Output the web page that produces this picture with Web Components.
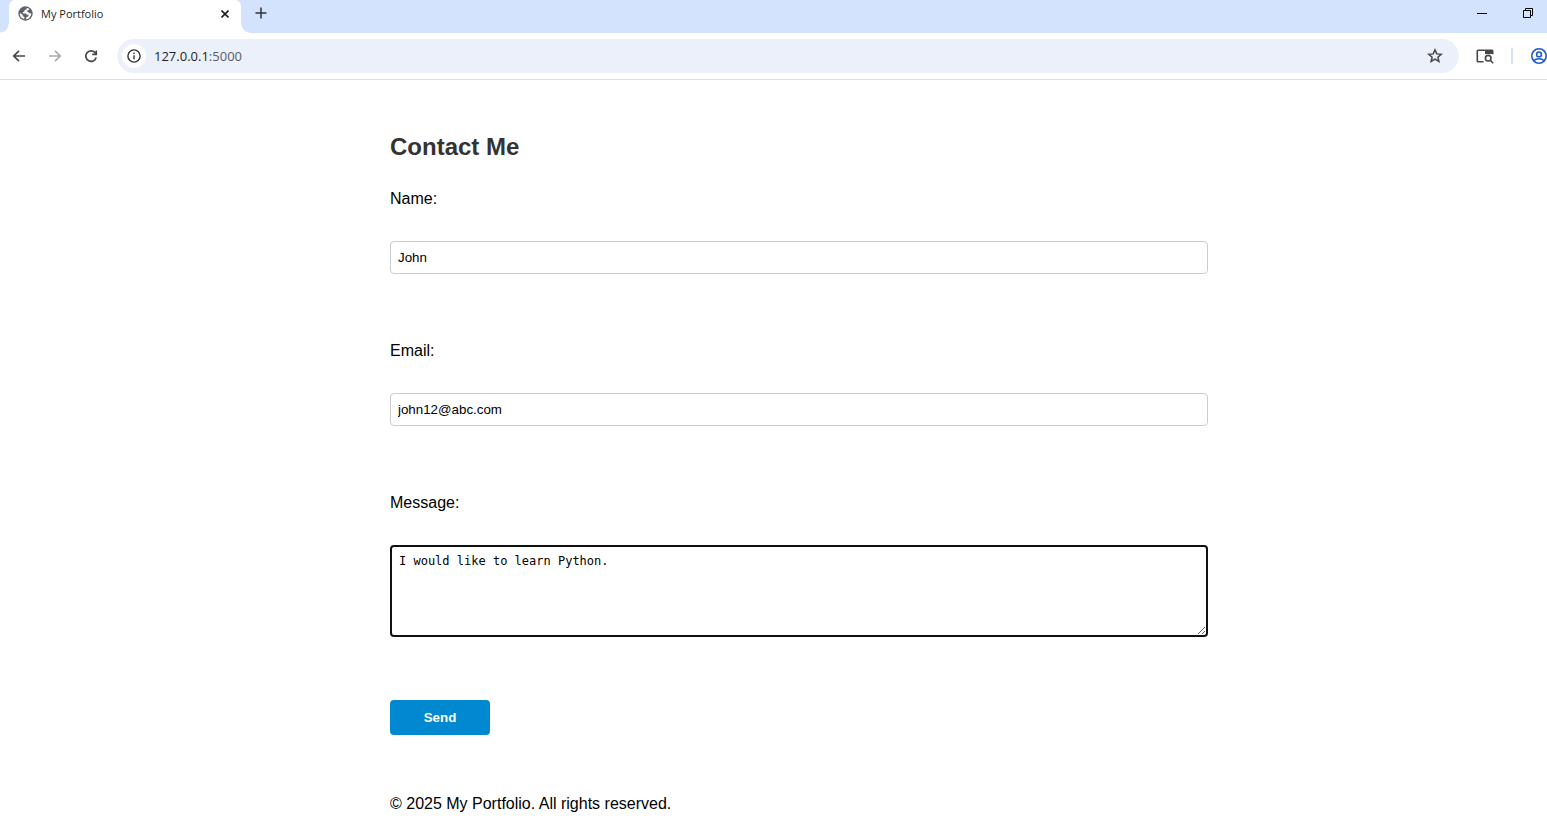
<!DOCTYPE html>
<html lang="en">
<head>
<meta charset="utf-8">
<meta name="viewport" content="width=device-width, initial-scale=1">
<title>My Portfolio</title>
<style>
  html, body { margin: 0; background: #fff; }
  body { font: 16px/24px "Liberation Sans", Arial, sans-serif; color: #000; }
</style>
</head>
<body>
<tab-strip><browser-tab>My Portfolio</browser-tab></tab-strip>
<nav-toolbar host="127.0.0.1" port=":5000"></nav-toolbar>
<contact-page>
  <span slot="title">Contact Me</span>
  <form-field label="Name:" type="text" value="John"></form-field>
  <form-field label="Email:" type="email" value="john12@abc.com"></form-field>
  <form-field label="Message:" type="multiline" value="I would like to learn Python."></form-field>
  <submit-button>Send</submit-button>
  <span slot="footer">© 2025 My Portfolio. All rights reserved.</span>
</contact-page>
<script>
const reset = `:host, *, *::before, *::after { box-sizing: border-box; }
  button { border: 0; margin: 0; padding: 0; background: none; font-family: inherit; color: inherit; }
  svg { display: block; }`;

class BaseElement extends HTMLElement {
  constructor() { super(); this.attachShadow({ mode: "open" }); }
  connectedCallback() {
    const t = document.createElement("template");
    t.innerHTML = `<style>${reset}${this.styles()}</style>${this.markup()}`;
    this.shadowRoot.replaceChildren(t.content.cloneNode(true));
  }
}

customElements.define("tab-strip", class extends BaseElement {
  styles() { return `
    :host { display: flex; height: 33px; padding-left: 9px; background: #d3e2fd; color: #1f1f1f; }
    .add { width: 40px; height: 26px; display: grid; place-items: center; }
    .window { margin-left: auto; display: flex; gap: 4px; height: 26px; color: #000; }
    .window button { display: grid; place-items: center; width: 46px; }
    .window button:last-child { width: 38px; }`; }
  markup() { return `<slot></slot>
    <button class="add" aria-label="New tab"><svg width="12" height="12" viewBox="0 0 12 12" fill="none" stroke="#303134" stroke-width="1.5"><path d="M6 .5v11M.5 6h11"/></svg></button>
    <div class="window">
      <button aria-label="Minimize"><svg width="10" height="10" viewBox="0 0 10 10"><path d="M0 5h10v1H0z"/></svg></button>
      <button aria-label="Restore"><svg width="10" height="10" viewBox="0 0 10 10" fill="none" stroke="#000"><path d="M.5 2.5h7v7h-7zM2.5 2.5v-2h7v7h-2"/></svg></button>
    </div>`; }
});

customElements.define("browser-tab", class extends BaseElement {
  styles() { return `
    :host { position: relative; display: flex; align-items: center; width: 232px; height: 33px; padding: 0 10px 6px 9px;
      background: #fff; border-radius: 6px 6px 0 0; font: 11px/20px "Open Sans", "Noto Sans", sans-serif; }
    :host::before, :host::after { content: ""; position: absolute; bottom: 0; width: 9px; height: 9px; }
    :host::before { right: 100%; background: radial-gradient(circle at 0 0, transparent 8px, #fff 9px); }
    :host::after { left: 100%; background: radial-gradient(circle at 100% 0, transparent 8px, #fff 9px); }
    .title { margin-left: 8px; flex: 1; white-space: nowrap; }
    button { width: 12px; height: 12px; display: grid; place-items: center; }`; }
  markup() { return `
    <svg width="15" height="15" viewBox="0 0 15 15"><circle cx="7.5" cy="7.5" r="7.2" fill="#5f6368"/>
      <path d="M8.7 1.7 8.6 3.4 6.7 4.1 6.1 5.7 4.7 6.1 5 7.4 8 7.4 8.9 8.7 10.6 8.7 10.3 10.5 8.4 11.2 8 13.3A5.8 5.8 0 0 0 13.3 7.2L11.8 7.6 10.3 6.3 9.2 6 9.5 4.4 11 3.7 11.4 2.9A5.8 5.8 0 0 0 8.7 1.7ZM1.8 7.1A5.7 5.7 0 0 0 6.3 13.1L6.4 11 4.9 10.3 4.6 8.8Z" fill="#fff"/></svg>
    <span class="title"><slot></slot></span>
    <button aria-label="Close tab"><svg width="8" height="8" viewBox="0 0 8 8" stroke="#1f1f1f" stroke-width="1.6"><path d="m.5.5 7 7m0-7-7 7"/></svg></button>`; }
});

customElements.define("nav-toolbar", class extends BaseElement {
  styles() { return `
    :host { display: flex; align-items: center; height: 47px; padding-left: 1px; background: #fff; border-bottom: 1px solid #dedede; color: #474747; }
    .nav { width: 36px; height: 36px; display: grid; place-items: center; flex: none; }
    .nav:disabled { color: #ababab; }
    .omnibox { flex: 1; min-width: 0; height: 34px; margin: 0 8px; padding: 0 16px 0 5px; display: flex; align-items: center; border-radius: 17px; background: #ecf0fa; }
    .info { flex: none; width: 24px; height: 24px; border-radius: 50%; background: #fff; display: grid; place-items: center; color: #303134; }
    .url { flex: 1; margin-left: 8px; font: 13px/20px "Open Sans", "Noto Sans", sans-serif; color: #1f1f1f; }
    .port { color: #5a5d61; }
    .divider { flex: none; width: 2px; height: 16px; margin: 0 18px 0 8px; background: #d3e2fd; }
    .profile { flex: none; color: #1f5bc4; }`; }
  markup() { return `
    <button class="nav" aria-label="Back"><svg width="14" height="14" viewBox="0 0 14 14" fill="none" stroke="currentColor" stroke-width="1.7"><path d="M13 7H2M7 1.8 1.8 7 7 12.2"/></svg></button>
    <button class="nav" aria-label="Forward" disabled><svg width="14" height="14" viewBox="0 0 14 14" fill="none" stroke="currentColor" stroke-width="1.7"><path d="M1 7h11M7 1.8 12.2 7 7 12.2"/></svg></button>
    <button class="nav" aria-label="Reload"><svg width="14" height="14" viewBox="0 0 14 14" fill="none" stroke="currentColor" stroke-width="1.7"><path d="M12.2 8.5A5.3 5.3 0 1 1 11 3.5l1.2 1.4M12.3 1.4v4H8.2"/></svg></button>
    <div class="omnibox">
      <button class="info" aria-label="View site information"><svg width="14" height="14" viewBox="0 0 14 14" fill="none" stroke="currentColor" stroke-width="1.4"><circle cx="7" cy="7" r="6.1"/><path d="M7 6.2v4M7 3.6v1.5"/></svg></button>
      <span class="url">${this.getAttribute("host")}<span class="port">${this.getAttribute("port")}</span></span>
      <button aria-label="Bookmark this tab"><svg width="16" height="16" viewBox="0 0 16 16" fill="none" stroke="currentColor" stroke-width="1.5"><path d="m8 1.9 1.8 4 4.4.4-3.3 2.9 1 4.3L8 11.2l-3.9 2.3 1-4.3-3.3-2.9 4.4-.4Z"/></svg></button>
    </div>
    <button class="nav" aria-label="Search this page"><svg width="18" height="16" viewBox="0 0 18 16" fill="none" stroke="currentColor" stroke-width="1.6"><path d="M7.5 13.7H2.1q-.8 0-.8-.8V3.1q0-.8.8-.8h13.8q.8 0 .8.8v3.2"/><path d="M9 2h8v4H9z" fill="currentColor" stroke="none"/><circle cx="12.2" cy="10.2" r="2.8"/><path d="m14.2 12.2 3 3"/></svg></button>
    <span class="divider"></span>
    <button class="profile" aria-label="Profile"><svg width="16" height="16" viewBox="0 0 16 16" fill="none" stroke="currentColor" stroke-width="1.6"><circle cx="8" cy="8" r="7.2"/><circle cx="8" cy="6.4" r="2.4"/><path d="M2.8 12.8q2-2 5.2-2t5.2 2"/></svg></button>`; }
});

customElements.define("contact-page", class extends BaseElement {
  styles() { return `
    :host { display: grid; grid-template-columns: minmax(16px, 390fr) minmax(0, 818px) minmax(16px, 339fr); padding-top: 53px; }
    main, footer { grid-column: 2; }
    h2 { margin: 0 0 26px; font-size: 24px; line-height: 28px; color: #333; }
    footer { margin-top: 57px; }`; }
  markup() { return `<main><h2><slot name="title"></slot></h2><form><slot></slot></form></main>
    <footer><slot name="footer"></slot></footer>`; }
});

customElements.define("form-field", class extends BaseElement {
  styles() { return `
    :host { display: flex; flex-direction: column; gap: 30px; margin-bottom: 65px; }
    :host([type="multiline"]) { margin-bottom: 63px; }
    input, textarea { display: block; width: 100%; margin: 0; background: #fff; color: #000; border-radius: 4px; outline: 0; }
    input { height: 33px; padding: 0 7px; border: 1px solid #ccc; font-family: inherit; }
    textarea { height: 92px; padding: 7px; border: 2px solid #101010; font: 12px/14px "DejaVu Sans Mono", monospace; resize: vertical; }`; }
  markup() {
    const value = this.getAttribute("value"), type = this.getAttribute("type");
    const control = type === "multiline"
      ? `<textarea id="control" spellcheck="false">${value}</textarea>`
      : `<input id="control" type="${type}" value="${value}">`;
    return `<label for="control">${this.getAttribute("label")}</label>${control}`;
  }
});

customElements.define("submit-button", class extends BaseElement {
  styles() { return `
    :host { display: block; }
    button { display: block; width: 100px; height: 35px; border-radius: 4px; background: #0288d1; color: #fff; font-weight: bold; }`; }
  markup() { return `<button type="submit"><slot></slot></button>`; }
});
</script>
</body>
</html>
